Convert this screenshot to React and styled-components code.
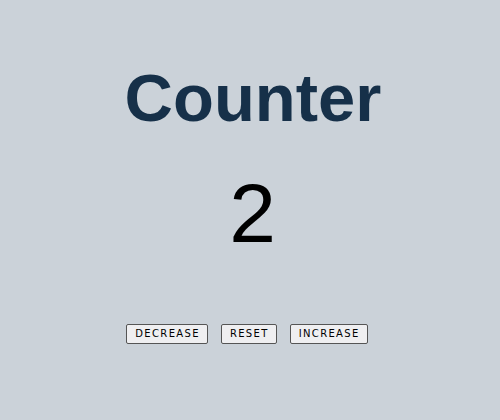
import React, { useState } from "react";
import styled, { createGlobalStyle } from "styled-components";

const GlobalStyle = createGlobalStyle`
  html, body {
    margin: 0;
    padding: 0;
    background: #cbd2d9;
    font-family: "Liberation Sans", Arial, sans-serif;
  }
`;

const Page = styled.main`
  min-height: 420px;
  display: flex;
  flex-direction: column;
  align-items: center;
  padding-top: 58px;
  box-sizing: border-box;
`;

const Title = styled.h1`
  margin: 0;
  font-size: 67px;
  font-weight: 700;
  color: #163049;
  line-height: 1.2;
  padding-left: 6px;
`;

const Value = styled.span`
  margin-top: 25px;
  font-size: 84px;
  line-height: 1.2;
  color: #000;
  padding-left: 5px;
`;

const ButtonRow = styled.div`
  display: flex;
  gap: 13px;
  margin-top: 60px;
  margin-right: 6px;
`;

const Button = styled.button`
  font-family: "DejaVu Sans", Verdana, sans-serif;
  font-size: 10px;
  letter-spacing: 1.35px;
  text-transform: uppercase;
  color: #000;
  background: #efeff1;
  border: 1px solid #555;
  border-radius: 2px;
  padding: 3px 7px 3px 8px;
  line-height: 12px;
  cursor: pointer;
`;

export default function App() {
  const [count, setCount] = useState(2);

  return (
    <>
      <GlobalStyle />
      <Page>
        <Title>Counter</Title>
        <Value>{count}</Value>
        <ButtonRow>
          <Button onClick={() => setCount(count - 1)}>Decrease</Button>
          <Button onClick={() => setCount(0)}>Reset</Button>
          <Button onClick={() => setCount(count + 1)}>Increase</Button>
        </ButtonRow>
      </Page>
    </>
  );
}
